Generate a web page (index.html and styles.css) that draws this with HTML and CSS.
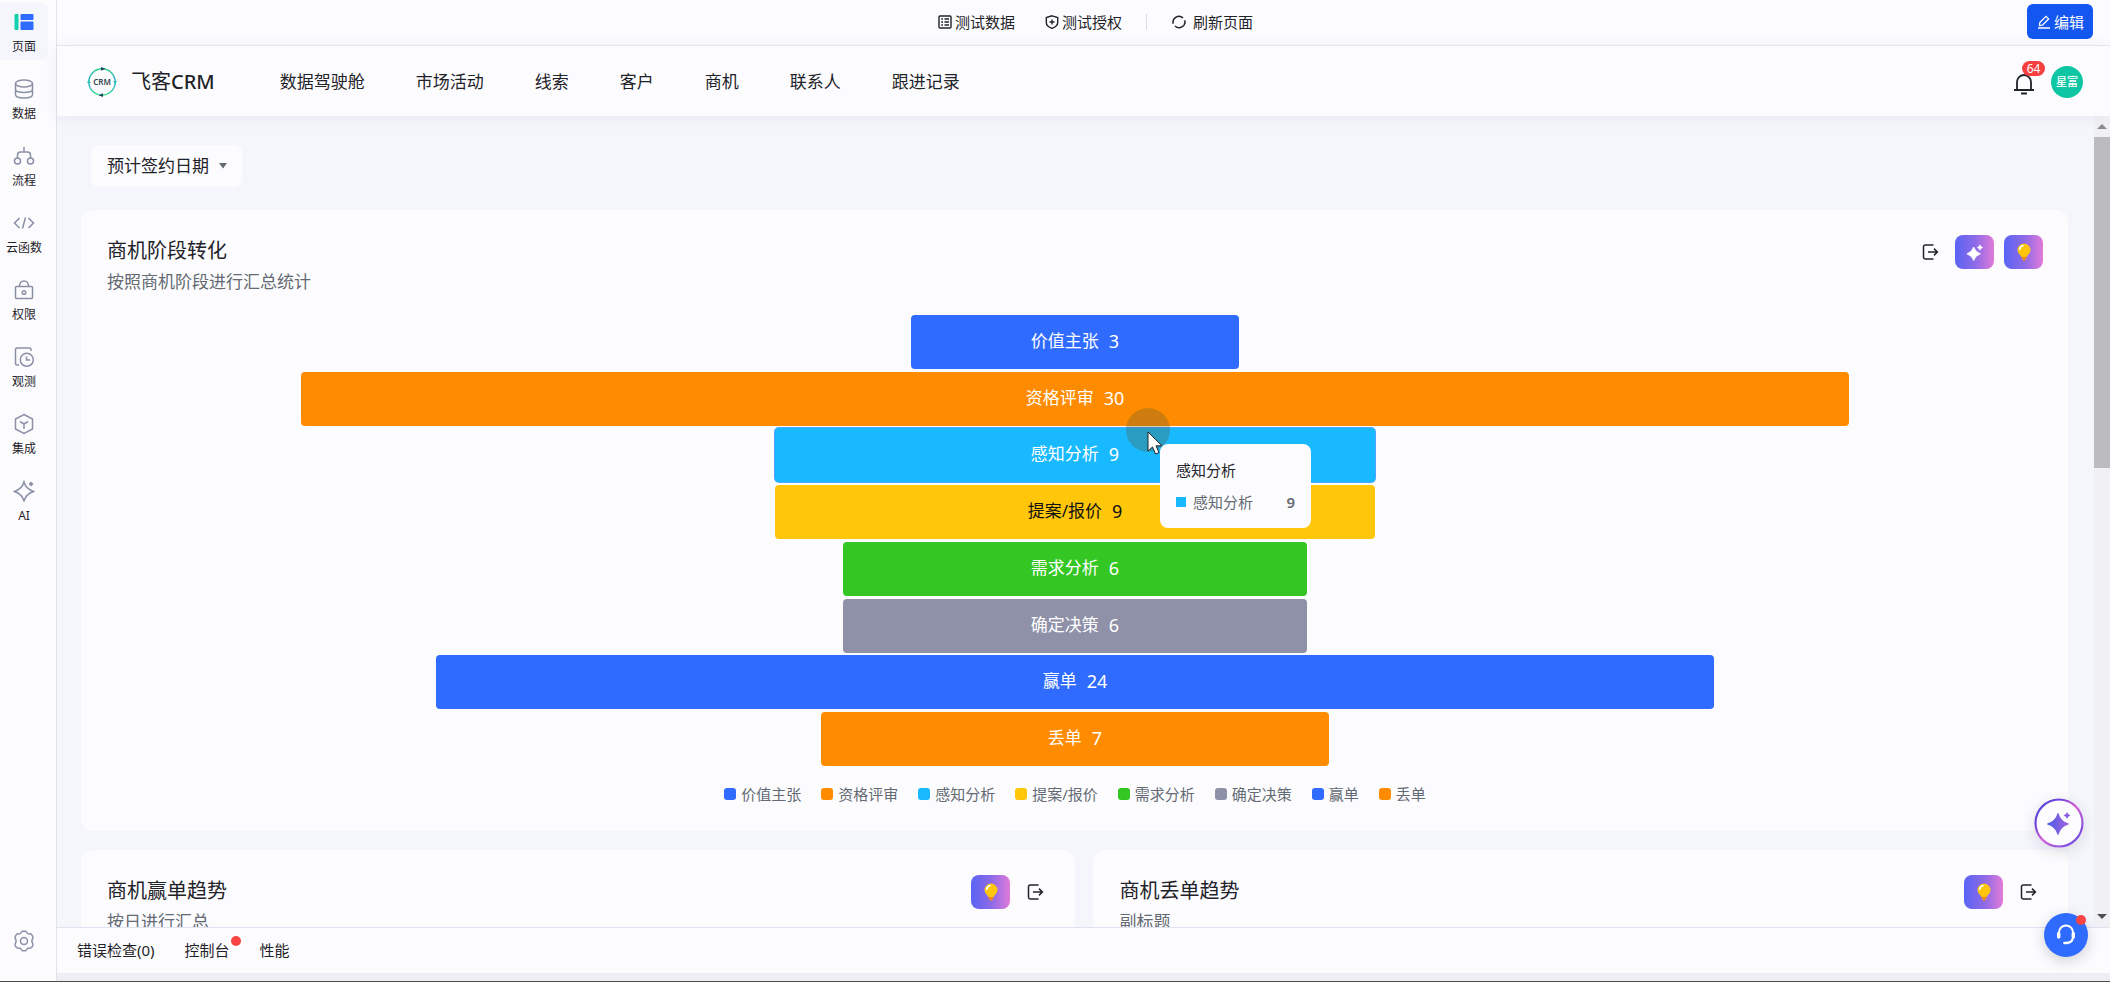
FILE: index.html
```html
<!DOCTYPE html>
<html lang="zh-CN">
<head>
<meta charset="utf-8">
<title>飞客CRM</title>
<link rel="stylesheet" href="styles.css">
</head>
<body>
<svg class="defs" width="0" height="0" aria-hidden="true">
  <defs>
    <linearGradient id="ring" x1="0" y1="0" x2="1" y2="1">
      <stop offset="0" stop-color="#5a4be0"/><stop offset="0.25" stop-color="#6a45d8"/>
      <stop offset="0.5" stop-color="#d45fd6"/><stop offset="1" stop-color="#5a4be0"/>
    </linearGradient>
    <linearGradient id="spark" x1="0" y1="0" x2="1" y2="0">
      <stop offset="0" stop-color="#4a5be8"/><stop offset="1" stop-color="#a463dc"/>
    </linearGradient>
    <linearGradient id="loop" x1="0" y1="0" x2="0" y2="1">
      <stop offset="0" stop-color="#2fd08a"/><stop offset="0.5" stop-color="#2aa8d8"/><stop offset="1" stop-color="#3ee08c"/>
    </linearGradient>
    <symbol id="i-export" viewBox="0 0 18 18">
      <path d="M12.500 2H4.200A1.700 1.700 0 0 0 2.500 3.700V14.300A1.700 1.700 0 0 0 4.200 16H12.500M7 9H16.200M13 5.600L16.400 9L13 12.400" fill="none" stroke="currentColor" stroke-width="1.500"/>
    </symbol>
    <symbol id="i-bulb" viewBox="0 0 16 20">
      <path d="M8 1.500A6.500 6.500 0 0 0 1.500 8C1.500 11 4 12.500 5.500 15H10.500C12 12.500 14.500 11 14.500 8A6.500 6.500 0 0 0 8 1.500Z" fill="#ffc60a"/>
      <path d="M3.600 7.500A4.600 4.600 0 0 1 7 3.600" fill="none" stroke="#fff" stroke-width="1.600" stroke-linecap="round"/>
      <path d="M5.500 15H10.500V16.800H9.500V18.500H6.500V16.800H5.500Z" fill="#f08a1c"/>
    </symbol>
    <symbol id="i-spark" viewBox="0 0 20 20">
      <path d="M8.500 4.500Q10.300 10.200 16 12Q10.300 13.800 8.500 19.500Q6.700 13.800 1 12Q6.700 10.200 8.500 4.500Z" stroke="currentColor" stroke-linejoin="round"/>
      <path d="M15.500 2Q16.200 4.300 18.500 5Q16.200 5.700 15.500 8Q14.800 5.700 12.500 5Q14.800 4.300 15.500 2Z" stroke="currentColor" stroke-width="0.600"/>
    </symbol>
  </defs>
</svg>

<div class="app">
  <nav class="rail" aria-label="工作台">
    <a class="rail-item rail-item-on" href="#">
      <svg width="22" height="22" viewBox="0 0 22 22"><rect x="1.500" y="3" width="4" height="16" rx="1" fill="#14cfae"/><rect x="7.500" y="3" width="13" height="6" rx="1" fill="#2f6bff"/><rect x="7.500" y="10.500" width="13" height="8.500" rx="1" fill="#2f6bff"/></svg>
      <span>页面</span>
    </a>
    <a class="rail-item" href="#">
      <svg width="22" height="22" viewBox="0 0 22 22"><ellipse cx="11" cy="5.500" rx="8.500" ry="3.500"/><path d="M2.500 5.500V16.500C2.500 18.500 6 20 11 20S19.500 18.500 19.500 16.500V5.500M2.500 11C2.500 13 6 14.500 11 14.500S19.500 13 19.500 11"/></svg>
      <span>数据</span>
    </a>
    <a class="rail-item" href="#">
      <svg width="22" height="22" viewBox="0 0 22 22"><circle cx="4.500" cy="16" r="3"/><circle cx="17.500" cy="16" r="3"/><path d="M11 2V7M4.500 13V10C4.500 8 5.500 7 7.500 7H14.500C16.500 7 17.500 8 17.500 10V13"/></svg>
      <span>流程</span>
    </a>
    <a class="rail-item" href="#">
      <svg width="22" height="22" viewBox="0 0 22 22"><path d="M6.500 6L1.500 11L6.500 16M15.500 6L20.500 11L15.500 16M12.500 5.500L9.500 16.500"/></svg>
      <span>云函数</span>
    </a>
    <a class="rail-item" href="#">
      <svg width="22" height="22" viewBox="0 0 22 22"><rect x="2.500" y="7.500" width="17" height="12" rx="1"/><path d="M6.500 7.500V6.500A4.500 4.500 0 0 1 15.500 6.500V7.500"/><circle cx="11" cy="13.500" r="1.800"/></svg>
      <span>权限</span>
    </a>
    <a class="rail-item" href="#">
      <svg width="22" height="22" viewBox="0 0 22 22"><path d="M6 19H4A1.500 1.500 0 0 1 2.500 17.500V3.500A1.500 1.500 0 0 1 4 2H16.500A1.500 1.500 0 0 1 18 3.500V5"/><circle cx="13.800" cy="13.800" r="6.500"/><path d="M13.500 10.500V14H17"/></svg>
      <span>观测</span>
    </a>
    <a class="rail-item" href="#">
      <svg width="22" height="22" viewBox="0 0 22 22"><path d="M11 1.500L19.500 6V16L11 20.500L2.500 16V6ZM7 8.500L11 11L15 8.500M11 11V16"/></svg>
      <span>集成</span>
    </a>
    <a class="rail-item" href="#">
      <svg width="22" height="22" viewBox="0 0 22 22"><path d="M11 2Q13 9 20.500 11.500Q13 14 11 21Q9 14 1.500 11.500Q9 9 11 2Z"/><path d="M18 1.500L20.500 4L18 6.500L15.500 4Z" fill="#8a90a6" stroke="none"/></svg>
      <span>AI</span>
    </a>
    <button class="rail-settings" type="button" aria-label="设置">
      <svg width="22" height="22" viewBox="0 0 22 22"><path d="M8.500 2.200Q9 1.300 10 1.300H12Q13 1.300 13.500 2.200Q14.300 4 16.300 3.900Q18 3.700 18.700 4.600L19.800 6.600Q20.300 7.600 19.600 8.500Q18 11 19.600 13.500Q20.300 14.400 19.800 15.400L18.700 17.400Q18 18.300 16.300 18.100Q14.300 18 13.500 19.800Q13 20.700 12 20.700H10Q9 20.700 8.500 19.800Q7.700 18 5.700 18.100Q4 18.300 3.300 17.400L2.200 15.400Q1.700 14.400 2.400 13.500Q4 11 2.400 8.500Q1.700 7.600 2.200 6.600L3.300 4.600Q4 3.700 5.700 3.900Q7.700 4 8.500 2.200Z"/><circle cx="11" cy="11" r="3.500"/></svg>
    </button>
  </nav>

  <div class="workspace">
    <div class="toolbar">
      <div class="toolbar-mid">
        <button class="tool" type="button">
          <svg width="14" height="14" viewBox="0 0 14 14"><rect x="1" y="1" width="12" height="12" rx="1"/><path d="M3.300 4H5M6.500 4H11M3.300 7H5M6.500 7H11M3.300 10H5M6.500 10H11"/></svg>
          测试数据
        </button>
        <button class="tool tool-next" type="button">
          <svg width="14" height="14" viewBox="0 0 14 14"><path d="M7 0.800L12.700 2.500V7.500C12.700 10 10 12.300 7 13.300C4 12.300 1.300 10 1.300 7.500V2.500ZM4.500 7H9.500M7 4.500V9.500"/></svg>
          测试授权
        </button>
        <span class="toolbar-rule"></span>
        <button class="tool tool-wide" type="button">
          <svg width="14" height="14" viewBox="0 0 14 14"><path d="M1.300 8.500A5.800 5.800 0 0 1 11 3M12.700 5.500A5.800 5.800 0 0 1 3 11M1 5.500V8.700M13 5.300V8.500"/></svg>
          刷新页面
        </button>
      </div>
      <button class="edit" type="button">
        <svg width="14" height="14" viewBox="0 0 14 14"><path d="M2.500 10.500L2.800 7.500L9 1.300L11.600 3.900L5.400 10.100ZM1 13H13"/></svg>
        编辑
      </button>
    </div>

    <header class="header">
      <svg class="logo" width="30" height="30" viewBox="0 0 30 30" role="img" aria-label="CRM">
        <circle cx="15" cy="15" r="13.200" fill="none" stroke="url(#loop)" stroke-width="1.400"/>
        <path d="M14 0L18.500 1.800L14 3.800ZM16 30L11.500 28.200L16 26.200Z" fill="#1d4a63"/>
        <path d="M26.200 14L30 14L28.200 17.500ZM0 16L3.800 16L1.800 12.500Z" fill="#2bc7b0"/>
        <text class="logo-text" x="15" y="18" text-anchor="middle">CRM</text>
      </svg>
      <span class="brand">飞客<span class="brand-en">CRM</span></span>
      <nav class="menu" aria-label="主导航">
        <a href="#">数据驾驶舱</a>
        <a href="#">市场活动</a>
        <a href="#">线索</a>
        <a href="#">客户</a>
        <a href="#">商机</a>
        <a href="#">联系人</a>
        <a href="#">跟进记录</a>
      </nav>
      <button class="bell" type="button" aria-label="通知">
        <svg width="22" height="24" viewBox="0 0 22 24"><path d="M4 18.500V11A7 7 0 0 1 18 11V18.500M1 19H21M8 22.500H14" fill="none" stroke="currentColor" stroke-width="1.800"/></svg>
        <span class="bell-count">64</span>
      </button>
      <span class="avatar">星富</span>
    </header>

    <div class="stage">
      <main class="page">
        <button class="filter" type="button">预计签约日期
          <svg width="8" height="6" viewBox="0 0 8 6"><path d="M0 0H8L4 5.500Z" fill="currentColor"/></svg>
        </button>

        <section class="card">
          <div class="card-head">
            <div>
              <h2 class="card-title">商机阶段转化</h2>
              <p class="card-sub">按照商机阶段进行汇总统计</p>
            </div>
            <div class="actions">
              <button class="act" type="button" aria-label="导出"><svg width="18" height="18"><use href="#i-export"/></svg></button>
              <button class="act-fill act-first" type="button" aria-label="智能分析"><svg width="18" height="18" fill="currentColor"><use href="#i-spark"/></svg></button>
              <button class="act-fill" type="button" aria-label="洞察"><svg width="16" height="20"><use href="#i-bulb"/></svg></button>
            </div>
          </div>

          <div class="funnel">
            <div class="bar blue" style="width:21.15%"><span>价值主张</span><span class="bar-num">3</span></div>
            <div class="bar orange" style="width:100%"><span>资格评审</span><span class="bar-num">30</span></div>
            <div class="bar sky bar-hover" style="width:38.7%"><span>感知分析</span><span class="bar-num">9</span></div>
            <div class="bar yellow" style="width:38.7%"><span>提案/报价</span><span class="bar-num">9</span></div>
            <div class="bar green" style="width:29.9%"><span>需求分析</span><span class="bar-num">6</span></div>
            <div class="bar gray" style="width:29.9%"><span>确定决策</span><span class="bar-num">6</span></div>
            <div class="bar blue" style="width:82.5%"><span>赢单</span><span class="bar-num">24</span></div>
            <div class="bar orange" style="width:32.8%"><span>丢单</span><span class="bar-num">7</span></div>

            <span class="touch"></span>
            <div class="tip" role="tooltip">
              <div class="tip-title">感知分析</div>
              <div class="tip-row"><i class="tip-dot sky"></i><span>感知分析</span><b>9</b></div>
            </div>
            <svg class="pointer" width="17" height="25" viewBox="0 0 17 25"><path d="M1 1V20L5.500 16L8.500 23L12 21.500L9 14.800H15Z" fill="#fff" stroke="#222" stroke-width="1"/></svg>
          </div>

          <ul class="legend">
            <li><i class="key blue"></i>价值主张</li>
            <li><i class="key orange"></i>资格评审</li>
            <li><i class="key sky"></i>感知分析</li>
            <li><i class="key yellow"></i>提案/报价</li>
            <li><i class="key green"></i>需求分析</li>
            <li><i class="key gray"></i>确定决策</li>
            <li><i class="key blue"></i>赢单</li>
            <li><i class="key orange"></i>丢单</li>
          </ul>
        </section>

        <div class="pair">
          <section class="card">
            <div class="card-head">
              <div>
                <h2 class="card-title">商机赢单趋势</h2>
                <p class="card-sub">按日进行汇总</p>
              </div>
              <div class="actions actions-end">
                <button class="act-fill" type="button" aria-label="洞察"><svg width="16" height="20"><use href="#i-bulb"/></svg></button>
                <button class="act act-last" type="button" aria-label="导出"><svg width="18" height="18"><use href="#i-export"/></svg></button>
              </div>
            </div>
          </section>
          <section class="card">
            <div class="card-head">
              <div>
                <h2 class="card-title">商机丢单趋势</h2>
                <p class="card-sub">副标题</p>
              </div>
              <div class="actions actions-end">
                <button class="act-fill" type="button" aria-label="洞察"><svg width="16" height="20"><use href="#i-bulb"/></svg></button>
                <button class="act act-last" type="button" aria-label="导出"><svg width="18" height="18"><use href="#i-export"/></svg></button>
              </div>
            </div>
          </section>
        </div>
      </main>

      <div class="scroll" aria-hidden="true">
        <svg width="10" height="5" viewBox="0 0 10 5"><path d="M0 5L5 0L10 5Z" fill="#8a8a90"/></svg>
        <div class="scroll-track"><div class="scroll-thumb"></div></div>
        <svg width="10" height="5" viewBox="0 0 10 5"><path d="M0 0L5 5L10 0Z" fill="#505050"/></svg>
      </div>
    </div>

    <footer class="status">
      <button type="button">错误检查(0)</button>
      <button type="button" class="status-alert">控制台</button>
      <button type="button">性能</button>
    </footer>
    <div class="strip"></div>
  </div>

  <button class="float-ai" type="button" aria-label="AI 助手">
    <svg width="50" height="50" viewBox="0 0 50 50"><circle cx="25" cy="25" r="23.500" fill="#fdfdff" stroke="url(#ring)" stroke-width="2.200"/><path d="M24 15.500Q26.500 23.500 34.500 26Q26.500 28.500 24 36.500Q21.500 28.500 13.500 26Q21.500 23.500 24 15.500Z" fill="url(#spark)" stroke="url(#spark)" stroke-linejoin="round"/><path d="M33 14Q33.700 16.800 36.500 17.500Q33.700 18.200 33 21Q32.300 18.200 29.500 17.500Q32.300 16.800 33 14Z" fill="#8a5fe0"/></svg>
  </button>
  <button class="float-help" type="button" aria-label="客服">
    <svg width="22" height="22" viewBox="0 0 22 22" fill="none" stroke="#fff" stroke-width="2"><path d="M4 8.500A7 7 0 0 1 18 8.500M18 13.500C17.500 17 15 19 11 19"/><path d="M3.700 9.500V13M18.300 9.500V13" stroke-width="3.400" stroke-linecap="round"/><path d="M9.500 19H12" stroke-width="2.600" stroke-linecap="round"/></svg>
  </button>
</div>
</body>
</html>
```
FILE: styles.css
```css
* { box-sizing: border-box; }

body {
  margin: 0;
  background: #fcfcfe;
  color: #1f2329;
  font-family: "Noto Sans", "Noto Sans CJK SC", sans-serif;
  font-size: 15px;
  line-height: 20px;
}

button {
  margin: 0;
  padding: 0;
  border: 0;
  background: none;
  color: inherit;
  font: inherit;
  cursor: pointer;
}

a { color: inherit; text-decoration: none; }
h2, p, ul { margin: 0; padding: 0; font-weight: 400; }
svg { display: block; flex: none; }
.defs { position: absolute; }

.app {
  display: flex;
  height: 100vh;
  overflow: hidden;
  border-bottom: 1px solid #4c4c4c;
}

/* left rail */
.rail {
  display: flex;
  flex-direction: column;
  flex: none;
  gap: 10px;
  width: 57px;
  padding: 3px 8px 29px 0;
  border-right: 1px solid #e2e3ea;
}

.rail-item {
  display: flex;
  flex-direction: column;
  align-items: center;
  gap: 5px;
  height: 57px;
  padding-top: 8px;
  border-radius: 0 6px 6px 0;
  font-size: 12px;
  line-height: 18px;
}

.rail-item-on { background: #f5f6fc; }

.rail svg { fill: none; stroke: #8a90a6; stroke-width: 1.5; }
.rail-item-on svg { stroke: none; }
.rail-settings { display: flex; justify-content: center; margin-top: auto; }

/* editor toolbar */
.workspace { display: flex; flex: 1; flex-direction: column; min-width: 0; }

.toolbar {
  display: grid;
  grid-template-columns: 1fr auto 1fr;
  align-items: center;
  flex: none;
  height: 46px;
  padding: 0 17px 2px 41px;
  border-bottom: 1px solid #e6e8f2;
}

.toolbar-mid { display: flex; grid-column: 2; align-items: center; }
.tool { display: flex; align-items: center; gap: 3px; }
.tool svg { fill: none; stroke: currentColor; stroke-width: 1.4; }
.tool-next { margin-left: 30px; }
.tool-wide { gap: 7px; }
.toolbar-rule { width: 1px; height: 16px; margin: 0 25px 0 24px; background: #dcdee6; }

.edit {
  display: flex;
  align-items: center;
  justify-self: end;
  gap: 3px;
  height: 35px;
  padding: 0 9px 0 10px;
  border-radius: 6px;
  background: #1456f0;
  color: #fff;
}

.edit svg { fill: none; stroke: currentColor; stroke-width: 1.3; }

/* app header */
.header {
  display: flex;
  position: relative;
  z-index: 1;
  align-items: center;
  flex: none;
  height: 70px;
  padding: 1px 27px 0 30px;
  background: #fcfcfe;
  box-shadow: 0 2px 16px rgba(31, 35, 60, 0.06);
}

.logo-text { font-size: 8px; font-weight: 600; fill: #33474f; }
.brand { margin-left: 14px; font-size: 20px; line-height: 28px; }
.brand-en { font-weight: 500; }
.menu { display: flex; flex: 1; gap: 51px; margin-left: 65px; font-size: 17px; line-height: 24px; }
.bell { position: relative; padding-top: 2px; }

.bell-count {
  position: absolute;
  top: -8px;
  left: 9px;
  width: 23px;
  border-radius: 8px;
  background: #f5403f;
  color: #fff;
  font-size: 12px;
  line-height: 15px;
}

.avatar {
  width: 32px;
  margin-left: 16px;
  border-radius: 16px;
  background: #0fc6a4;
  color: #fff;
  font-size: 11px;
  font-weight: 500;
  line-height: 32px;
  text-align: center;
}

/* dashboard */
.stage { display: flex; flex: 1; min-height: 0; background: #f5f6fc; }
.page { flex: 1; min-width: 0; padding: 29px 26px 0 24px; overflow: hidden; }

.filter {
  display: flex;
  align-items: center;
  gap: 10px;
  height: 42px;
  margin: 0 0 23px 10px;
  padding: 0 15px 0 16px;
  border-radius: 8px;
  background: #fcfcfe;
  font-size: 17px;
}

.filter svg { color: #646a73; }

.card { padding: 25px 25px 27px 26px; border-radius: 12px; background: #fcfcfe; }
.card-head { display: flex; justify-content: space-between; align-items: flex-start; }
.card-title { font-size: 20px; line-height: 32px; }
.card-sub { margin-top: 4px; color: #646a73; font-size: 17px; line-height: 22px; }

.actions { display: flex; align-items: center; gap: 10px; }
.actions-end { padding-right: 6px; }
.act-first { margin-left: 6px; }
.act-last { margin-left: 6px; }

.act-fill {
  display: flex;
  align-items: center;
  justify-content: center;
  width: 39px;
  height: 34px;
  border-radius: 8px;
  background: linear-gradient(90deg, #5b64f5, #8a6ae8 50%, #e07ad8);
  color: #fff;
}

.funnel {
  display: flex;
  position: relative;
  flex-direction: column;
  justify-content: space-between;
  align-items: center;
  width: 80%;
  height: 451px;
  margin: 22px auto 18px;
}

.bar {
  display: flex;
  align-items: center;
  justify-content: center;
  gap: 10px;
  height: 54px;
  padding-bottom: 2px;
  border-radius: 4px;
  color: #fff;
  font-size: 17px;
}

.bar-num { font-size: 18px; }

.blue { background: #2f6bff; }
.orange { background: #ff8c00; }
.sky { background: #18b9ff; }
.yellow { background: #ffc60a; }
.green { background: #34c724; }
.gray { background: #8f91a8; }
.bar.yellow { color: #111; }
.bar-hover { box-shadow: 0 0 0 1px #4fa4ff; }

.touch {
  position: absolute;
  top: 93px;
  left: calc(50% + 51px);
  width: 44px;
  height: 44px;
  border-radius: 50%;
  background: rgba(90, 90, 50, 0.3);
}

.pointer { position: absolute; top: 116px; left: calc(50% + 72px); }

.tip {
  position: absolute;
  top: 129px;
  left: calc(50% + 85px);
  width: 151px;
  padding: 16px;
  border-radius: 8px;
  background: #fcfcfe;
}

.tip-row { display: flex; align-items: center; gap: 7px; margin-top: 12px; color: #646a73; }
.tip-row b { margin-left: auto; font-weight: 600; }
.tip-dot { width: 10px; height: 10px; }

.legend { display: flex; justify-content: center; gap: 20px; color: #646a73; list-style: none; }
.legend li { display: flex; align-items: center; gap: 5px; }
.key { width: 12px; height: 12px; border-radius: 3px; }

.pair {
  display: grid;
  grid-template-columns: 995fr 975fr;
  gap: 18px;
  margin-top: 19px;
}

.pair .card { height: 400px; }

.scroll {
  display: flex;
  flex-direction: column;
  align-items: center;
  flex: none;
  gap: 8px;
  width: 16px;
  padding: 8px 0;
  background: #f1f1f5;
}

.scroll-track { flex: 1; width: 100%; }
.scroll-thumb { height: 43%; background: #bcbcc0; }

/* bottom status bar */
.status {
  display: flex;
  align-items: center;
  flex: none;
  gap: 30px;
  height: 46px;
  padding: 0 0 2px 20px;
  border-top: 1px solid #dfe2f0;
}

.status-alert { position: relative; }

.status-alert::after,
.float-help::after {
  content: "";
  position: absolute;
  top: -4px;
  right: -11px;
  width: 10px;
  height: 10px;
  border-radius: 50%;
  background: #fa4343;
}

.strip { flex: none; height: 8px; background: #eeeff5; }

/* floating buttons */
.float-ai {
  position: fixed;
  z-index: 2;
  right: 26px;
  bottom: 134px;
  border-radius: 50%;
  box-shadow: 0 4px 14px rgba(31, 35, 60, 0.12);
}

.float-help {
  display: flex;
  position: fixed;
  z-index: 2;
  right: 22px;
  bottom: 25px;
  align-items: center;
  justify-content: center;
  width: 44px;
  height: 44px;
  border-radius: 50%;
  background: #2f6bff;
  box-shadow: 0 4px 14px rgba(31, 35, 60, 0.2);
}

.float-help::after { top: 2px; right: 2px; }
```
